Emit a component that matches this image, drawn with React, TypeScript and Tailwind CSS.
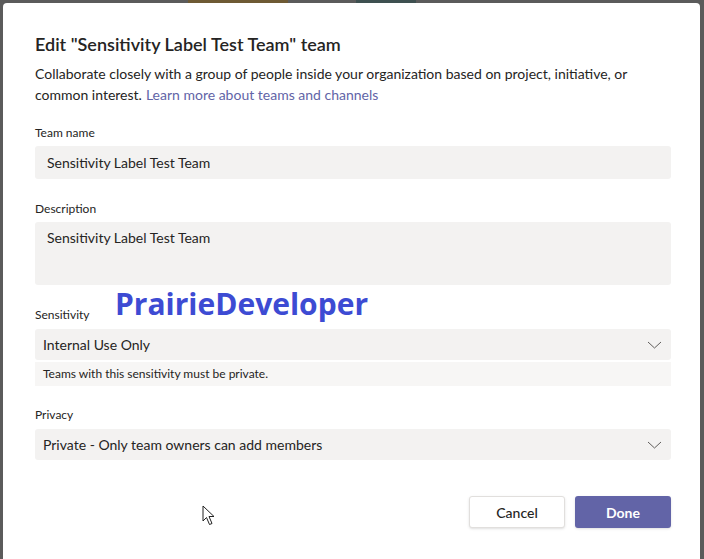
const font = { fontFamily: '"Segoe UI", Lato, "Open Sans", sans-serif' };

function Label({ children, className = "" }: { children: string; className?: string }) {
  return <div className={`text-[12px] leading-[16px] text-[#252423] ${className}`}>{children}</div>;
}

function Chevron() {
  return (
    <svg width="15" height="8" viewBox="0 0 15 8" className="text-[#605e5c]">
      <polyline points="1,1 7.5,7 14,1" fill="none" stroke="currentColor" strokeWidth="1" />
    </svg>
  );
}

function Select({ value }: { value: string }) {
  return (
    <div className="flex h-[31px] items-center justify-between rounded-[3px] bg-[#f3f2f1] pl-[8px] pr-[9px] text-[14px] text-[#252423]">
      <span>{value}</span>
      <Chevron />
    </div>
  );
}

export default function App() {
  return (
    <div className="relative h-[559px] w-[704px] overflow-hidden bg-[#5b5b5b]" style={font}>
      {/* bits of the app peeking out behind the modal */}
      <div className="absolute left-[188px] top-0 h-[4px] w-[100px] bg-[#6e5a34]" />
      <div className="absolute left-[356px] top-0 h-[4px] w-[60px] bg-[#3e5050]" />

      <div className="relative ml-[3px] mt-[3px] h-[560px] w-[697px] rounded-[4px] bg-white pl-[32px] pr-[29px] pt-[29px]">
        <h1 className="text-[18px] font-semibold leading-[24px] text-[#252423]">
          Edit "Sensitivity Label Test Team" team
        </h1>
        <div className="mt-[7px] text-[14px] leading-[21px] text-[#252423]">
          <div>Collaborate closely with a group of people inside your organization based on project, initiative, or</div>
          <div className="flex gap-[4px]">
            <span>common interest.</span>
            <span className="text-[#6264a7]">Learn more about teams and channels</span>
          </div>
        </div>

        <Label className="mt-[20px]">Team name</Label>
        <div className="mt-[5px] flex h-[33px] items-center rounded-[3px] bg-[#f3f2f1] px-[12px] text-[14px] text-[#252423]">
          Sensitivity Label Test Team
        </div>

        <Label className="mt-[22px]">Description</Label>
        <div className="mt-[5px] h-[63px] rounded-[3px] bg-[#f3f2f1] px-[12px] pt-[6px] text-[14px] leading-[20px] text-[#252423]">
          Sensitivity Label Test Team
        </div>

        <Label className="mt-[22px]">Sensitivity</Label>
        <div className="mt-[6px] w-[636px]">
          <Select value="Internal Use Only" />
          <div className="mt-[2px] flex h-[24px] items-center bg-[#f7f6f5] px-[8px] text-[12px] text-[#252423]">
            Teams with this sensitivity must be private.
          </div>
        </div>

        <Label className="mt-[21px]">Privacy</Label>
        <div className="mt-[6px] w-[636px]">
          <Select value="Private - Only team owners can add members" />
        </div>

        <div className="mt-[36px] flex w-[636px] justify-end gap-[10px]">
          <button className="h-[32px] w-[96px] rounded-[3px] border border-[#e1dfdd] bg-white text-[14px] font-medium text-[#252423] shadow-sm">
            Cancel
          </button>
          <button className="h-[32px] w-[96px] rounded-[3px] bg-[#6264a7] text-[14px] font-bold text-white shadow-sm">
            Done
          </button>
        </div>
      </div>

      <div
        className="absolute left-[115px] top-[285px] text-[30px] font-bold leading-[38px] text-[#3d4bd3]"
        style={{ fontFamily: '"Open Sans", sans-serif' }}
      >
        PrairieDeveloper
      </div>

      {/* mouse pointer */}
      <svg className="absolute left-[202px] top-[505px]" width="14" height="22" viewBox="0 0 14 22">
        <path
          d="M1 1 L1 16 L4.5 12.5 L7.5 19.5 L10 18.5 L7 11.5 L12 11.5 Z"
          fill="white"
          stroke="#222"
          strokeWidth="1"
          strokeLinejoin="round"
        />
      </svg>
    </div>
  );
}
